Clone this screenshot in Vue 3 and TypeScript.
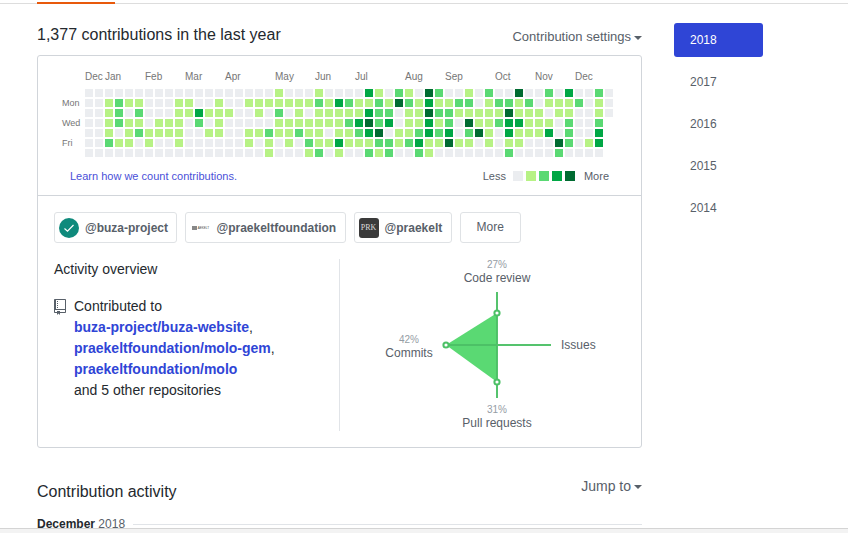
<template>
  <div class="page">
    <div class="tabs"><span class="tab-active"></span></div>
    <div class="layout">
      <main class="main">
        <div class="head-row">
          <h2 class="heading">1,377 contributions in the last year</h2>
          <span class="menu settings">Contribution settings<i class="caret"></i></span>
        </div>

        <section class="card">
          <div class="graph">
            <div class="calendar">
              <span v-for="m in months" :key="m.col" class="month" :style="{ gridColumn: m.col + 2 }">{{ m.name }}</span>
              <span v-for="d in days" :key="d.row" class="day" :style="{ gridRow: d.row + 2 }">{{ d.name }}</span>
              <span
                v-for="cell in cells"
                :key="cell.key"
                class="cell"
                :class="'lvl' + cell.level"
                :style="{ gridColumn: cell.col + 2, gridRow: cell.row + 2 }"
              ></span>
            </div>
            <div class="graph-foot">
              <a class="learn">Learn how we count contributions.</a>
              <div class="legend">
                <span>Less</span>
                <div class="legend-cells">
                  <i v-for="l in 5" :key="l" :class="'lvl' + (l - 1)"></i>
                </div>
                <span>More</span>
              </div>
            </div>
          </div>

          <div class="overview">
            <div class="orgs">
              <span class="org">
                <span class="avatar teal">
                  <svg width="12" height="12" viewBox="0 0 12 12" fill="none">
                    <path d="M1.5 6.5L4.5 9.2L10.5 3" stroke="#fff" stroke-width="1.2" />
                  </svg>
                </span>
                @buza-project
              </span>
              <span class="org">
                <span class="avatar logo"><b></b>AEKELT</span>
                @praekeltfoundation
              </span>
              <span class="org">
                <span class="avatar prk">PRK</span>
                @praekelt
              </span>
              <span class="more">More</span>
            </div>

            <div class="activity">
              <div class="activity-left">
                <h3 class="sub">Activity overview</h3>
                <div class="repos">
                  <svg class="book" width="12" height="16" viewBox="0 0 12 16" fill="#586069">
                    <path fill-rule="evenodd" d="M4 9H3V8h1v1zm0-3H3v1h1V6zm0-2H3v1h1V4zm0-2H3v1h1V2zm8-1v12c0 .55-.45 1-1 1H6v2l-1.5-1.5L3 16v-2H1c-.55 0-1-.45-1-1V1c0-.55.45-1 1-1h10c.55 0 1 .45 1 1zm-1 10H1v2h2v-1h3v1h5v-2zm0-10H2v9h9V1z" />
                  </svg>
                  <div>
                    Contributed to<br />
                    <a>buza-project/buza-website</a>,<br />
                    <a>praekeltfoundation/molo-gem</a>,<br />
                    <a>praekeltfoundation/molo</a><br />
                    and 5 other repositories
                  </div>
                </div>
              </div>
              <div class="activity-right">
                <svg width="300" height="172" viewBox="0 0 300 172">
                  <polygon points="106,86 157,54 157,123" fill="#5ad973" />
                  <g stroke="#4cc066" stroke-width="2" stroke-linecap="butt" opacity="0.95">
                    <line x1="157" y1="33" x2="157" y2="139" />
                    <line x1="106" y1="86" x2="211" y2="86" />
                  </g>
                  <g fill="#fff" stroke="#4cc066" stroke-width="2">
                    <circle cx="106" cy="86" r="2.6" />
                    <circle cx="157" cy="54" r="2.6" />
                    <circle cx="157" cy="123" r="2.6" />
                  </g>
                  <g class="pct" text-anchor="middle">
                    <text x="157" y="9">27%</text>
                    <text x="69" y="84">42%</text>
                    <text x="157" y="154">31%</text>
                  </g>
                  <g class="lbl">
                    <text x="157" y="23" text-anchor="middle">Code review</text>
                    <text x="69" y="98" text-anchor="middle">Commits</text>
                    <text x="221" y="90">Issues</text>
                    <text x="157" y="168" text-anchor="middle">Pull requests</text>
                  </g>
                </svg>
              </div>
            </div>
          </div>
        </section>

        <div class="head-row activity-head">
          <h2 class="heading">Contribution activity</h2>
          <span class="menu jump">Jump to<i class="caret"></i></span>
        </div>
        <div class="timeline">
          <span class="tl-label"><b>December</b> 2018</span>
          <span class="tl-line"></span>
        </div>
      </main>

      <nav class="years">
        <a v-for="(y, i) in years" :key="y" class="year" :class="{ selected: i === 0 }">{{ y }}</a>
      </nav>
    </div>
    <div class="window-edge"></div>
  </div>
</template>

<script setup lang="ts">
const months = [
  { name: 'Dec', col: 0 },
  { name: 'Jan', col: 2 },
  { name: 'Feb', col: 6 },
  { name: 'Mar', col: 10 },
  { name: 'Apr', col: 14 },
  { name: 'May', col: 19 },
  { name: 'Jun', col: 23 },
  { name: 'Jul', col: 27 },
  { name: 'Aug', col: 32 },
  { name: 'Sep', col: 36 },
  { name: 'Oct', col: 41 },
  { name: 'Nov', col: 45 },
  { name: 'Dec', col: 49 }
];

const days = [
  { name: 'Mon', row: 1 },
  { name: 'Wed', row: 3 },
  { name: 'Fri', row: 5 }
];

const years = [2018, 2017, 2016, 2015, 2014];

// One string per weekday, one digit per week
const rows = [
  '00000000000000000001' + '000' + '1' + '0000' + '3102104200102004002030020',
  '001211000110010011' + '11111213' + '211214213112201221201112010',
  '001202000113111001' + '02010111' + '113220114221111141110110010',
  '001211011102010000' + '01111111' + '23423011312041123311102002',
  '001012111100110011' + '21121101' + '12340112323024103111302003',
  '002110100100000010' + '10102113' + '11122123114110101100042013',
  '000000000000000000' + '10001201' + '00212002100000002000020000'
];

const cells = rows.flatMap((line, row) =>
  line.split('').map((level, col) => ({ key: `${row}-${col}`, row, col, level }))
);
</script>

<style>
html,
body {
  margin: 0;
  overflow: hidden;
  background: #fff;
}
</style>

<style scoped>
.page {
  position: relative;
  height: 533px;
  overflow: hidden;
  font-family: "Liberation Sans", Arial, sans-serif;
  font-size: 14px;
  color: #24292e;
}

.tabs {
  display: flow-root;
  height: 1px;
  margin-top: 3px;
  padding-left: 37px;
  background: #ddd;
}

.tab-active {
  display: block;
  width: 78px;
  height: 2px;
  margin-top: -1px;
  background: #e8590c;
}

.layout {
  display: flex;
  align-items: flex-start;
  padding-left: 37px;
}

.main {
  width: 605px;
  flex: none;
}

.head-row {
  display: flex;
  justify-content: space-between;
  height: 51px;
  padding-top: 21px;
  box-sizing: border-box;
}

.heading {
  margin: 0;
  font-size: 16px;
  line-height: 20px;
  font-weight: 400;
}

.menu {
  color: #586069;
  line-height: 18px;
}

.settings {
  margin-top: 3px;
  font-size: 13px;
}

.caret {
  display: inline-block;
  margin-left: 3px;
  vertical-align: middle;
  border: 4px solid transparent;
  border-top-color: #586069;
  border-bottom: 0;
}

.card {
  border: 1px solid #d1d5da;
  border-radius: 3px;
}

.graph {
  height: 139px;
  border-bottom: 1px solid #d1d5da;
}

.calendar {
  display: grid;
  grid-template-columns: 23px repeat(53, 10px);
  grid-template-rows: 17px repeat(7, 10px);
  padding: 15px 0 0 24px;
}

.month {
  grid-row: 1;
  font-size: 10px;
  line-height: 12px;
  color: #767676;
  white-space: nowrap;
}

.day {
  grid-column: 1;
  font-size: 9px;
  line-height: 10px;
  color: #767676;
}

.cell {
  width: 8px;
  height: 8px;
  margin-top: 1px;
}

.lvl0 {
  background: #ebedf0;
}

.lvl1 {
  background: #b7f285;
}

.lvl2 {
  background: #5ad973;
}

.lvl3 {
  background: #00a745;
}

.lvl4 {
  background: #006b31;
}

.graph-foot {
  display: flex;
  justify-content: space-between;
  align-items: center;
  margin-top: 11px;
  padding: 0 32px;
  font-size: 11px;
  line-height: 14px;
}

.learn {
  color: #4a50d8;
}

.legend {
  display: flex;
  align-items: center;
  color: #586069;
}

.legend-cells {
  display: flex;
  gap: 3px;
  margin: 0 9px 0 7px;
}

.legend-cells i {
  width: 10px;
  height: 10px;
}

.overview {
  padding: 16px 16px 16px;
}

.orgs {
  display: flex;
  gap: 8px;
}

.org {
  display: flex;
  align-items: center;
  gap: 6px;
  height: 31px;
  padding: 0 8.4px 0 4px;
  box-sizing: border-box;
  border: 1px solid #dfe2e5;
  border-radius: 3px;
  font-size: 12px;
  font-weight: 700;
  color: #586069;
  white-space: nowrap;
}

.avatar {
  display: flex;
  align-items: center;
  justify-content: center;
  width: 20px;
  height: 20px;
  flex: none;
}

.teal {
  border-radius: 50%;
  background: #0f8a7c;
}

.logo {
  font-size: 3px;
  font-weight: 400;
  color: #444;
}

.logo b {
  width: 5px;
  height: 4px;
  margin-right: 1px;
  background: #888;
}

.prk {
  border-radius: 3px;
  background: #3a3a3a;
  color: #ddd;
  font-family: "Liberation Serif", serif;
  font-size: 8px;
  font-weight: 400;
}

.more {
  width: 61px;
  height: 31px;
  box-sizing: border-box;
  border: 1px solid #dfe2e5;
  border-radius: 3px;
  font-size: 12px;
  line-height: 29px;
  text-align: center;
  color: #586069;
}

.activity {
  display: flex;
  margin-top: 16px;
  height: 172px;
}

.activity-left {
  width: 286px;
  flex: none;
  border-right: 1px solid #e1e4e8;
  box-sizing: border-box;
}

.sub {
  margin: 0;
  font-size: 14px;
  line-height: 20px;
  font-weight: 400;
}

.repos {
  display: flex;
  gap: 8px;
  margin-top: 17px;
  line-height: 21px;
}

.book {
  margin-top: 3px;
  flex: none;
}

.repos a {
  font-weight: 700;
  color: #2f45d6;
}

.activity-right {
  flex: 1;
  overflow: hidden;
}

.pct {
  font-size: 10px;
  fill: #959da5;
}

.lbl {
  font-size: 12px;
  fill: #586069;
}

.activity-head {
  height: 70px;
  padding-top: 34px;
}

.jump {
  margin-top: -5px;
}

.timeline {
  display: flex;
  align-items: center;
  gap: 8px;
  height: 14px;
  margin-top: -1px;
}

.tl-label {
  font-size: 12px;
  color: #586069;
  white-space: nowrap;
}

.tl-label b {
  color: #24292e;
}

.tl-line {
  flex: 1;
  height: 1px;
  background: #e1e4e8;
}

.years {
  width: 89px;
  margin: 19px 0 0 32px;
  flex: none;
}

.year {
  display: block;
  height: 34px;
  margin-bottom: 8px;
  padding-left: 16px;
  border-radius: 3px;
  font-size: 12px;
  line-height: 34px;
  color: #586069;
}

.selected {
  background: #2f45d6;
  color: #fff;
}

.window-edge {
  position: absolute;
  left: 0;
  right: 0;
  bottom: 0;
  height: 4px;
  border-top: 1px solid #d4d4d4;
  background: #f3f3f3;
}
</style>
